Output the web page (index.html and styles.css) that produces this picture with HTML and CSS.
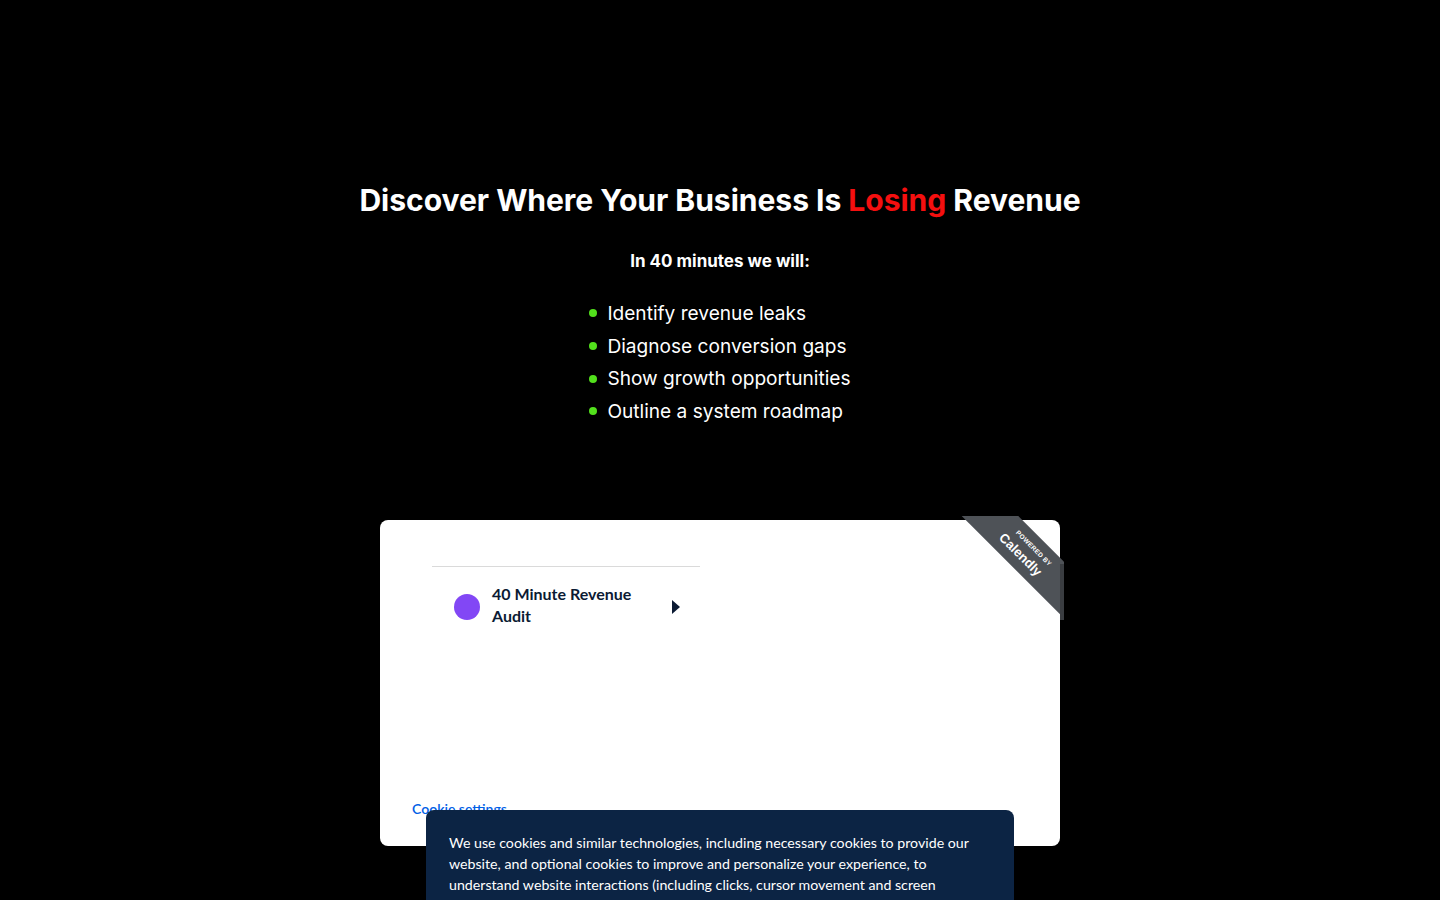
FILE: index.html
```html
<!DOCTYPE html>
<html lang="en">
<head>
<meta charset="utf-8">
<title>Revenue Audit</title>
<link rel="stylesheet" href="styles.css">
</head>
<body>
<main class="page">
  <h1 class="title">Discover Where Your Business Is <span class="accent">Losing</span> Revenue</h1>
  <p class="lead">In 40 minutes we will:</p>
  <ul class="points">
    <li>Identify revenue leaks</li>
    <li>Diagnose conversion gaps</li>
    <li>Show growth opportunities</li>
    <li>Outline a system roadmap</li>
  </ul>

  <section class="widget">
    <div class="ribbon">
      <div class="band">
        <span class="powered">POWERED BY</span>
        <span class="brand">Calendly</span>
      </div>
    </div>
    <div class="events">
      <a class="event" href="#">
        <span class="dot"></span>
        <span class="event-name">40 Minute Revenue Audit</span>
        <span class="arrow"></span>
      </a>
    </div>
    <a class="cookie-link" href="#">Cookie settings</a>
  </section>
</main>

<div class="cookie-banner">
  <p>We use cookies and similar technologies, including necessary cookies to provide our website, and optional cookies to improve and personalize your experience, to understand website interactions (including clicks, cursor movement and screen recordings), and for analytics, advertising and marketing purposes.</p>
</div>
</body>
</html>
```

FILE: styles.css
```css
html, body {
  margin: 0;
  padding: 0;
  background: #000;
  height: 100%;
  overflow: hidden;
}

.page {
  display: flex;
  flex-direction: column;
  align-items: center;
  padding-top: 181px;
  font-family: Inter, "Liberation Sans", sans-serif;
  color: #fff;
}

.title {
  margin: 0;
  font-size: 30.1px;
  line-height: 38px;
  font-weight: 700;
  letter-spacing: -0.05px;
}

.accent {
  color: #f40f0f;
}

.lead {
  margin: 31px 0 0;
  font-size: 17px;
  line-height: 22px;
  font-weight: 700;
}

.points {
  list-style: none;
  margin: 25px 0 0;
  padding: 0;
}

.points li {
  display: flex;
  align-items: center;
  gap: 10px;
  font-size: 19.1px;
  line-height: 32.7px;
}

.points li::before {
  content: "";
  width: 8px;
  height: 8px;
  border-radius: 50%;
  background: #52e01c;
  flex: none;
}

.widget {
  position: relative;
  box-sizing: border-box;
  width: 680px;
  height: 326px;
  margin-top: 92px;
  background: #fff;
  border-radius: 8px;
  display: flex;
  flex-direction: column;
  padding: 46px 0 0 52px;
  font-family: Lato, "Liberation Sans", sans-serif;
}

.ribbon {
  position: absolute;
  top: -4px;
  right: -4px;
  width: 104px;
  height: 104px;
  overflow: hidden;
}

.ribbon::after {
  content: "";
  position: absolute;
  right: 0;
  bottom: 0;
  width: 4px;
  height: 56px;
  background: #3a3d41;
}

.band {
  position: absolute;
  left: -34px;
  top: 16px;
  width: 200px;
  height: 40px;
  background: #4e5257;
  transform: rotate(45deg);
  display: flex;
  flex-direction: column;
  align-items: center;
  justify-content: center;
  color: #fff;
  font-family: "Liberation Sans", Arial, sans-serif;
  font-weight: 700;
}

.powered {
  font-size: 6.5px;
  line-height: 9px;
  letter-spacing: 0.3px;
  margin-left: 6px;
}

.brand {
  font-size: 13px;
  line-height: 15px;
  margin-top: 2px;
  margin-left: -4px;
}

.events {
  width: 268px;
  border-top: 1px solid #dadada;
}

.event {
  display: flex;
  align-items: center;
  padding: 16px 20px 16px 22px;
  text-decoration: none;
  color: #0b1a33;
}

.dot {
  width: 26px;
  height: 26px;
  border-radius: 50%;
  background: #8247f5;
  flex: none;
  margin-right: 12px;
  margin-top: 4px;
}

.event-name {
  flex: 1;
  font-size: 16px;
  line-height: 22px;
  font-weight: 700;
  padding-right: 16px;
}

.arrow {
  width: 0;
  height: 0;
  border-top: 7px solid transparent;
  border-bottom: 7px solid transparent;
  border-left: 8px solid #0b1a33;
  flex: none;
  margin-top: 4px;
}

.cookie-link {
  margin-top: auto;
  margin-left: -20px;
  margin-bottom: 29px;
  font-size: 14px;
  line-height: 16px;
  color: #0060e6;
  text-decoration: none;
  font-weight: 600;
}

.cookie-banner {
  position: fixed;
  left: 426px;
  top: 810px;
  width: 588px;
  box-sizing: border-box;
  padding: 22px 23px;
  background: #0c2444;
  border-radius: 8px;
  color: #fff;
  font-family: Lato, "Liberation Sans", sans-serif;
}

.cookie-banner p {
  margin: 0;
  font-size: 14.2px;
  line-height: 21px;
}
```
